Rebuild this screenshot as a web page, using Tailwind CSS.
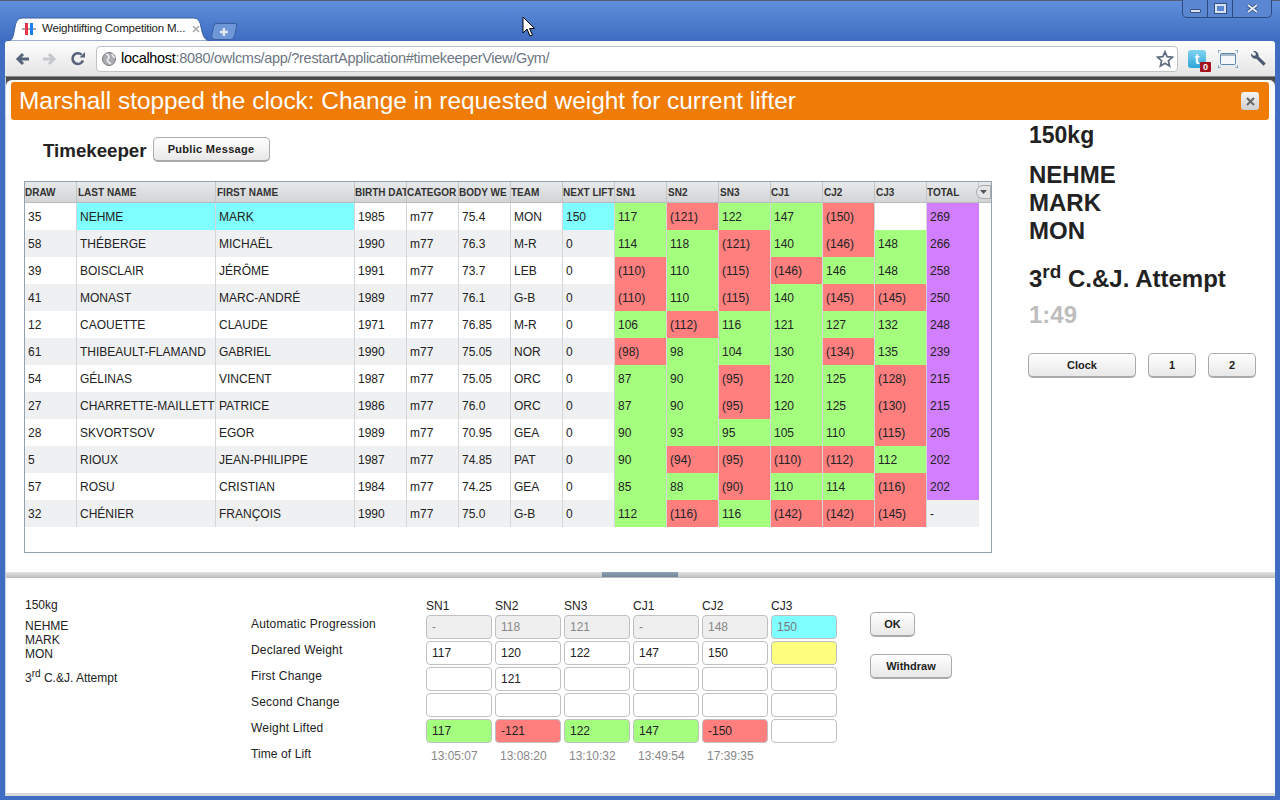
<!DOCTYPE html>
<html lang="en">
<head>
  <meta charset="UTF-8">
  <title>Weightlifting Competition Manager</title>
  <script src="https://cdn.jsdelivr.net/npm/@tailwindcss/browser@4"></script>
</head>
<body class="w-[1280px] h-[800px] overflow-hidden bg-[#3f6dc1] font-['Liberation_Sans',Arial,sans-serif] text-[12px] text-[#222] relative">

  <!-- Title bar with tabs -->
  <div class="h-[41px] flex items-start bg-gradient-to-b from-[#5f8fdc] to-[#3f6cc0] border-t border-[#55606e] relative">
    <div class="relative w-[204px] h-[24px] mt-[16px] ml-[7px] shrink-0 flex items-center pl-[15px]">
      <svg class="absolute left-0 top-0" width="204" height="24" viewBox="0 0 204 24"><path d="M0 24C6 24 6 20 8 10C9 4 11 1 16 1H186C191 1 193 4 194 10C196 20 198 24 204 24Z" fill="#fff" stroke="#3a5f9f"/></svg>
      <svg class="relative shrink-0" width="14" height="14" viewBox="0 0 14 14"><rect x="0" y="6" width="14" height="2" fill="#aaa"/><rect x="3" y="1" width="3" height="12" fill="#e8344a"/><rect x="8" y="1" width="3" height="12" fill="#1a7fe8"/></svg>
      <span class="relative ml-[6px] text-[11.5px] tracking-[-0.2px] text-[#222] whitespace-nowrap">Weightlifting Competition M...</span>
      <svg class="relative shrink-0 ml-[7px]" width="8" height="8" viewBox="0 0 8 8"><path d="M1 1L7 7M7 1L1 7" stroke="#aaa" stroke-width="1.6"/></svg>
    </div>
    <div class="w-[24px] h-[17px] mt-[22px] ml-[1px] rounded-b-[5px] rounded-t-[3px] bg-[#6f96d6] border border-[#3a5f9f] flex items-center justify-center -skew-x-12">
      <svg class="skew-x-12" width="10" height="10" viewBox="0 0 10 10"><path d="M5 1V9M1 5H9" stroke="#dfe8f6" stroke-width="2.4"/></svg>
    </div>
    <!-- window buttons -->
    <div class="ml-auto mr-[8px] -mt-px flex h-[18px] rounded-b-[5px] border border-t-0 border-[#2d4a80] bg-[#5b87d2]">
      <div class="w-[25px] flex items-center justify-center border-r border-[#2d4a80]"><div class="w-[11px] h-[4px] mt-[4px] rounded-[1px] bg-[#d7e2f3] border border-[#34507f]"></div></div>
      <div class="w-[25px] flex items-center justify-center border-r border-[#2d4a80]"><div class="w-[11px] h-[9px] bg-[#5b87d2] border-2 border-[#d7e2f3] outline outline-[#34507f]"></div></div>
      <div class="w-[38px] flex items-center justify-center"><svg width="11" height="9" viewBox="0 0 11 9"><path d="M1 1L10 8M10 1L1 8" stroke="#34507f" stroke-width="3.4"/><path d="M1 1L10 8M10 1L1 8" stroke="#e4ebf7" stroke-width="1.8"/></svg></div>
    </div>
  </div>

  <!-- Toolbar -->
  <div class="mx-[5px] h-[36px] flex items-center bg-gradient-to-b from-[#fefefe] to-[#e4e4e4] border-b border-[#8a8a8a] rounded-tl-[3px] rounded-tr-[3px] relative">
    <svg class="ml-[9px]" width="17" height="16" viewBox="0 0 17 16"><path d="M15 8H5M9 3L4 8L9 13" fill="none" stroke="#56637a" stroke-width="3"/></svg>
    <svg class="ml-[10px]" width="17" height="16" viewBox="0 0 17 16"><path d="M2 8H12M8 3L13 8L8 13" fill="none" stroke="#c4c8cf" stroke-width="3"/></svg>
    <svg class="ml-[12px]" width="16" height="16" viewBox="0 0 16 16"><path d="M13 9.5A5.4 5.4 0 1 1 11.6 3.6" fill="none" stroke="#56637a" stroke-width="2.6"/><path d="M9.5 6.5H15V1Z" fill="#56637a"/></svg>
    <div class="ml-[10px] w-[1082px] h-[26px] rounded-[4px] bg-white border border-[#bfc2c6] flex items-center pl-[4px]">
      <svg width="16" height="16" viewBox="0 0 16 16"><circle cx="8" cy="8" r="6.5" fill="#a9adb3" stroke="#777"/><path d="M5 3C8 4 9 6 7 8C5 9 8 12 10 13M11 3C12 6 13 6 14 7" fill="none" stroke="#eee" stroke-width="1.6"/></svg>
      <span class="ml-[4px] text-[14.5px] tracking-[-0.3px] text-[#6d7683] whitespace-nowrap"><span class="text-black">localhost</span>:8080/owlcms/app/?restartApplication#timekeeperView/Gym/</span>
      <svg class="ml-auto mr-[3px]" width="18" height="18" viewBox="0 0 18 18"><path d="M9 1.8L11.1 6.7L16.4 7.2L12.4 10.7L13.6 15.9L9 13.2L4.4 15.9L5.6 10.7L1.6 7.2L6.9 6.7Z" fill="#fff" stroke="#5f6b80" stroke-width="1.7"/></svg>
    </div>
    <div class="relative ml-[10px] w-[18px] h-[18px] rounded-[3px] bg-gradient-to-b from-[#7fd4f2] to-[#2aa5d8] flex items-center justify-center">
      <span class="text-white text-[14px] font-bold leading-none">t</span>
      <span class="absolute -right-[5px] -bottom-[4px] w-[11px] h-[10px] bg-[#a50f1d] rounded-[1px] text-white text-[9px] font-bold leading-[10px] text-center">0</span>
    </div>
    <svg class="ml-[12px]" width="20" height="18" viewBox="0 0 20 18"><rect x="2.5" y="3.5" width="15" height="11" rx="1" fill="#f4f7fa" stroke="#5b86ad"/><rect x="3" y="4" width="14" height="2" fill="#a9b9c9"/><path d="M0 3V0H3M17 0H20V3M0 15V18H3M17 18H20V15" fill="none" stroke="#4d82b0" stroke-width="1.2"/></svg>
    <svg class="ml-[12px]" width="17" height="17" viewBox="0 0 17 17"><path d="M3 1.2A4.6 4.6 0 0 1 8.6 6.4L15.8 13.4L13.5 15.8L6.4 8.7A4.6 4.6 0 0 1 1 3.4L3.6 5.8L5.6 5.4L5.9 3.5Z" fill="#4b5a70"/></svg>
  </div>

  <!-- Page -->
  <div class="mx-[5px] w-[1270px] h-[719px] bg-white flex flex-col border-l border-[#c5d0e0]">
    <!-- upper pane -->
    <div class="h-[495px] shrink-0 flex flex-col">
      <div class="h-[45px] bg-gradient-to-b from-[#444] to-white pt-[3px]">
        <div class="h-[42px] rounded-[6px] bg-white pl-[5px] pr-[6px] pt-[2px]">
          <div class="h-[38px] rounded-[3px] bg-[#f07c08] text-white flex items-center pl-[8px] pr-[10px]">
            <span class="text-[24.4px] whitespace-nowrap">Marshall stopped the clock: Change in requested weight for current lifter</span>
            <div class="ml-auto w-[18px] h-[18px] rounded-[3px] bg-gradient-to-b from-[#f4f4f4] to-[#cfcfcf] flex items-center justify-center">
              <svg width="9" height="9" viewBox="0 0 9 9"><path d="M1 1L8 8M8 1L1 8" stroke="#666" stroke-width="2"/></svg>
            </div>
          </div>
        </div>
      </div>

      <div class="flex flex-1 min-h-0">
        <!-- left: timekeeper list -->
        <div class="w-[1022px] shrink-0 pl-[18px]">
          <div class="h-[59px] flex items-start pl-[19px] pt-[15px]">
            <span class="text-[18.7px] font-bold leading-[27px]">Timekeeper</span>
            <button class="ml-[6px] w-[117px] h-[25px] rounded-[5px] border border-[#aaa] border-b-2 bg-gradient-to-b from-white to-[#e8e8e8] text-[11px] tracking-[0.3px] font-bold text-[#222]">Public Message</button>
          </div>
          <div class="w-[968px] h-[372px] border border-[#92a2ae]" id="table">
            <div id="head" class="grid grid-cols-[52px_139px_139px_52px_52px_52px_52px_52px_52px_52px_52px_52px_52px_52px_52px] h-[21px] bg-gradient-to-b from-[#e8e9ea] to-[#d2d4d6] border-b border-[#b8bcc0] relative"></div>
            <div id="rows"></div>
          </div>
        </div>

        <!-- right: current lifter -->
        <div class="flex-1 pl-px text-[24px] font-bold text-[#222]">
          <div class="text-[23px] leading-[28px] mt-[-1px]">150kg</div>
          <div class="mt-[12px] leading-[28px]">NEHME<br>MARK<br>MON</div>
          <div class="mt-[20px] leading-[28px]">3<sup class="text-[19px]">rd</sup> C.&amp;J. Attempt</div>
          <div class="mt-[8px] leading-[28px] text-[#bdbdbd]">1:49</div>
          <div class="mt-[24px] -ml-px flex">
            <button class="w-[108px] h-[25px] rounded-[5px] border border-[#aaa] border-b-2 bg-gradient-to-b from-white to-[#e8e8e8] text-[11px] font-bold text-[#222]">Clock</button>
            <button class="ml-[12px] w-[48px] h-[25px] rounded-[5px] border border-[#aaa] border-b-2 bg-gradient-to-b from-white to-[#e8e8e8] text-[11px] font-bold text-[#222]">1</button>
            <button class="ml-[12px] w-[48px] h-[25px] rounded-[5px] border border-[#aaa] border-b-2 bg-gradient-to-b from-white to-[#e8e8e8] text-[11px] font-bold text-[#222]">2</button>
          </div>
        </div>
      </div>
    </div>

    <!-- splitter -->
    <div class="h-[6px] shrink-0 bg-gradient-to-b from-[#e2e4e6] to-[#b8babc] flex justify-center">
      <div class="w-[76px] h-[5px] mr-[2px] bg-gradient-to-b from-[#8ea0b4] to-[#73879c]"></div>
    </div>

    <!-- lower pane -->
    <div class="flex-1 flex min-h-0 text-[12px]">
      <div class="w-[245px] shrink-0 pl-[19px] pt-[21px]">
        <div class="leading-[13px]">150kg</div>
        <div class="mt-[7px] leading-[14px]">NEHME<br>MARK<br>MON</div>
        <div class="mt-[10px] leading-[14px]">3<sup class="text-[10px]">rd</sup> C.&amp;J. Attempt</div>
      </div>
      <div class="pt-[20px]">
        <div id="decl" class="grid grid-cols-[172px_66px_66px_66px_66px_66px_66px] gap-x-[3px] gap-y-[2px] items-center"></div>
      </div>
      <div class="ml-[33px] pt-[34px] flex flex-col items-start">
        <button class="w-[45px] h-[25px] rounded-[5px] border border-[#aaa] border-b-2 bg-gradient-to-b from-white to-[#e8e8e8] text-[11px] font-bold text-[#222]">OK</button>
        <button class="mt-[17px] w-[82px] h-[25px] rounded-[5px] border border-[#aaa] border-b-2 bg-gradient-to-b from-white to-[#e8e8e8] text-[11px] font-bold text-[#222]">Withdraw</button>
      </div>
    </div>
    <div class="h-[3px] shrink-0 bg-[#d6d8da]"></div>
  </div>

  <!-- mouse pointer -->
  <svg class="absolute left-[522px] top-[16px]" width="13" height="21" viewBox="0 0 13 21"><path d="M1 1V17L5 13L8 20L10.5 19L7.5 12.5H12.5Z" fill="#fff" stroke="#000"/></svg>

  <script>
    const headers = ['DRAW', 'LAST NAME', 'FIRST NAME', 'BIRTH DAT', 'CATEGOR', 'BODY WE', 'TEAM', 'NEXT LIFT', 'SN1', 'SN2', 'SN3', 'CJ1', 'CJ2', 'CJ3', 'TOTAL'];
    const lifters = [
      ['35', 'NEHME', 'MARK', '1985', 'm77', '75.4', 'MON', '150', '117', '(121)', '122', '147', '(150)', '', '269'],
      ['58', 'THÉBERGE', 'MICHAËL', '1990', 'm77', '76.3', 'M-R', '0', '114', '118', '(121)', '140', '(146)', '148', '266'],
      ['39', 'BOISCLAIR', 'JÉRÔME', '1991', 'm77', '73.7', 'LEB', '0', '(110)', '110', '(115)', '(146)', '146', '148', '258'],
      ['41', 'MONAST', 'MARC-ANDRÉ', '1989', 'm77', '76.1', 'G-B', '0', '(110)', '110', '(115)', '140', '(145)', '(145)', '250'],
      ['12', 'CAOUETTE', 'CLAUDE', '1971', 'm77', '76.85', 'M-R', '0', '106', '(112)', '116', '121', '127', '132', '248'],
      ['61', 'THIBEAULT-FLAMAND', 'GABRIEL', '1990', 'm77', '75.05', 'NOR', '0', '(98)', '98', '104', '130', '(134)', '135', '239'],
      ['54', 'GÉLINAS', 'VINCENT', '1987', 'm77', '75.05', 'ORC', '0', '87', '90', '(95)', '120', '125', '(128)', '215'],
      ['27', 'CHARRETTE-MAILLETT', 'PATRICE', '1986', 'm77', '76.0', 'ORC', '0', '87', '90', '(95)', '120', '125', '(130)', '215'],
      ['28', 'SKVORTSOV', 'EGOR', '1989', 'm77', '70.95', 'GEA', '0', '90', '93', '95', '105', '110', '(115)', '205'],
      ['5', 'RIOUX', 'JEAN-PHILIPPE', '1987', 'm77', '74.85', 'PAT', '0', '90', '(94)', '(95)', '(110)', '(112)', '112', '202'],
      ['57', 'ROSU', 'CRISTIAN', '1984', 'm77', '74.25', 'GEA', '0', '85', '88', '(90)', '110', '114', '(116)', '202'],
      ['32', 'CHÉNIER', 'FRANÇOIS', '1990', 'm77', '75.0', 'G-B', '0', '112', '(116)', '116', '(142)', '(142)', '(145)', '-']
    ];

    const head = document.getElementById('head');
    headers.forEach((h, i) => {
      const d = document.createElement('div');
      const indent = [1, 2, 8, 9, 10, 12, 13].includes(i) ? 'pl-px' : 'pl-0';
      d.className = 'text-[10px] font-bold leading-[22px] text-[#333] whitespace-nowrap overflow-hidden border-r border-[#c2c5c8] ' + indent;
      d.textContent = h;
      head.appendChild(d);
    });
    const sort = document.createElement('div');
    sort.className = 'absolute right-0 top-[3px] w-[15px] h-[14px] rounded-l-[7px] border border-[#aaa] bg-[#e4e5e6] flex items-center justify-center';
    sort.innerHTML = '<svg width="7" height="4" viewBox="0 0 7 4"><path d="M0 0H7L3.5 4Z" fill="#555"/></svg>';
    head.appendChild(sort);

    const rows = document.getElementById('rows');
    lifters.forEach((l, r) => {
      const row = document.createElement('div');
      row.className = 'grid grid-cols-[52px_139px_139px_52px_52px_52px_52px_52px_52px_52px_52px_52px_52px_52px_52px] h-[27px] w-[954px]';
      l.forEach((v, i) => {
        const c = document.createElement('div');
        let bg = r % 2 ? 'bg-[#eff0f2]' : 'bg-white';
        if (r === 0 && (i === 1 || i === 2 || i === 7)) bg = 'bg-[#7fffff]';
        if (i >= 8 && i <= 13 && v !== '') bg = v[0] === '(' ? 'bg-[#ff7f7f]' : 'bg-[#a4ff7f]';
        if (i === 14 && v !== '-') bg = 'bg-[#d27fff]';
        const edge = i === 14 ? 'border-r-0' : 'border-r border-[#d4d6d8]';
        c.className = 'pl-[3px] h-[27px] leading-[29px] text-[12px] text-[#222] whitespace-nowrap overflow-hidden ' + edge + ' ' + bg;
        c.textContent = v;
        row.appendChild(c);
      });
      rows.appendChild(row);
    });

    const decl = document.getElementById('decl');
    const cols = ['SN1', 'SN2', 'SN3', 'CJ1', 'CJ2', 'CJ3'];
    const form = [
      ['Automatic Progression', ['-', '118', '121', '-', '148', '150'], 'auto'],
      ['Declared Weight', ['117', '120', '122', '147', '150', ''], 'decl'],
      ['First Change', ['', '121', '', '', '', ''], ''],
      ['Second Change', ['', '', '', '', '', ''], ''],
      ['Weight Lifted', ['117', '-121', '122', '147', '-150', ''], 'lift']
    ];
    const add = (cls, txt) => {
      const d = document.createElement('div');
      d.className = cls;
      d.textContent = txt;
      decl.appendChild(d);
    };
    add('', '');
    cols.forEach(c => add('leading-[14px] mt-px', c));
    form.forEach(([label, vals, kind]) => {
      add('leading-[14px] h-[20px] tracking-[0.2px]', label);
      vals.forEach((v, i) => {
        let bg = 'bg-white text-[#222]';
        if (kind === 'auto') bg = i === 5 ? 'bg-[#7fffff] text-[#777]' : 'bg-[#efefef] text-[#888]';
        if (kind === 'decl' && i === 5) bg = 'bg-[#ffff7f]';
        if (kind === 'lift' && v) bg = v[0] === '-' ? 'bg-[#ff7f7f] text-[#222]' : 'bg-[#a4ff7f] text-[#222]';
        add('h-[24px] rounded-[4px] border border-[#c0c0c0] pl-[5px] leading-[22px] ' + bg, v);
      });
    });
    add('leading-[14px] tracking-[0.1px]', 'Time of Lift');
    ['13:05:07', '13:08:20', '13:10:32', '13:49:54', '17:39:35', ''].forEach(t => add('leading-[14px] pl-[5px] mt-[4px] text-[#888]', t));
  </script>
</body>
</html>
